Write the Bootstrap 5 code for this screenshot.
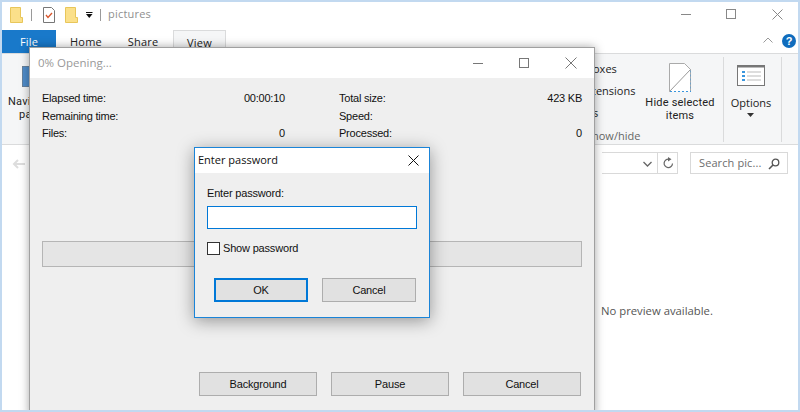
<!DOCTYPE html>
<html lang="en">
<head>
<meta charset="utf-8">
<title>pictures</title>
<link href="https://cdn.jsdelivr.net/npm/bootstrap@5.3.0/dist/css/bootstrap.min.css" rel="stylesheet">
<style>
html,body{margin:0;height:412px;overflow:hidden}
body{background:#c2d9f0;position:relative;font-family:"Open Sans","Noto Sans",sans-serif;font-size:11px;color:#222}
.explorer{position:absolute;left:2px;top:2px;width:796px;height:408px;background:#fff;overflow:hidden}
.qat{height:28px;padding:0 0 3px 8px}
.qat-title{color:#8f8f8f;font-size:11px;letter-spacing:.2px;margin-left:7px}
.qat-sep{width:1px;height:12px;background:#9a9a9a;margin:0 11px 0 8px}
.qat-sep.tail{margin:0 0 0 7px}
.win-ctl{margin-left:auto}
.tabs{height:23px;position:relative}
.tabx{height:23px;line-height:23px;text-align:center;font-size:11px;letter-spacing:.2px}
.tab-file{width:54px;background:#1979ca;color:#fff}
.tab-home{width:60px}.tab-share{width:54px}
.tab-view{width:53px;margin-left:3px;border:1px solid #dadbdc;border-bottom:0;background:#f5f6f7}
.ribbon{height:92px;background:#f5f6f7;border-top:1px solid #dadbdc;border-bottom:1px solid #dadbdc;position:relative}
.rib-abs{position:absolute;white-space:nowrap;line-height:13px}
.rib-two{font-family:Roboto,sans-serif;font-size:11px;letter-spacing:.2px}
.addr{height:36px;position:relative}
.search{position:absolute;left:688px;top:7px;width:98px;height:22px;border:1px solid #d9d9d9;color:#6d6d6d;padding-left:8px;line-height:20px;letter-spacing:.1px}
.addr-box{position:absolute;left:600px;top:7px;width:76px;height:22px;border:1px solid #d9d9d9;border-left:0}
.preview{position:absolute;left:599px;top:301px;color:#555;font-size:11.3px;white-space:nowrap}
.backarrow{position:absolute;left:10px;top:14px}
.desk-clip{position:absolute;left:0;top:0;width:800px;height:410px;overflow:hidden}
.progress-win{position:absolute;left:29px;top:47px;width:566px;height:370px;background:#efefef;border:1px solid #a0a0a0;box-shadow:0 0 9px rgba(0,0,0,.35);font-family:"Liberation Sans",Arial,sans-serif;font-size:11px;letter-spacing:-.22px;color:#111}
.win-title{height:30px;background:#fff;color:#999;font-family:"Open Sans",sans-serif;font-size:11.5px;letter-spacing:0;padding-left:8px;line-height:29px}
.stat-grid{display:grid;grid-template-columns:243px 243px;column-gap:54px;padding:12px 0 0 12px}
.stat-row{display:flex;justify-content:space-between;height:17.5px;line-height:17.5px;white-space:nowrap}
.pbar{margin:98.5px 0 0 12px;width:540px;height:26px;background:#e5e5e5;border:1px solid #b5b5b5}
.wbtns{margin:105px 0 0 169px;gap:14px}
.wbtn{width:118px;height:24px;background:#e1e1e1;border:1px solid #adadad;text-align:center;line-height:21px;font-size:11px;letter-spacing:-.18px;color:#111;padding:0;border-radius:0}
.pwd-dlg{position:absolute;left:194px;top:147px;width:236px;height:171px;background:#efefef;border:1px solid #1a84d8;box-shadow:0 3px 16px rgba(0,0,0,.38);font-family:"Liberation Sans",Arial,sans-serif;font-size:11px;letter-spacing:-.18px;color:#111}
.dlg-title{height:25px;background:#fff;font-family:"Open Sans",sans-serif;font-size:11px;letter-spacing:0;padding-left:3px;line-height:24px;color:#111}
.dlg-body{padding:12px 12px 0 12px}
.dlg-label{line-height:17px}
.pw-input{width:210px;height:23px;background:#fff;border:1px solid #0078d7;border-radius:0;display:block;margin-top:4px;padding:0}
.chk-row{margin-top:13px;gap:3px;height:13px;line-height:13px}
.chk-box{width:13px;height:13px;background:#fff;border:1px solid #333;margin:0;appearance:none;display:block}
.dlg-btns{margin:23px 0 0 7px;gap:14px}
.dlg-btn{width:94px;height:24px;background:#e1e1e1;border:1px solid #adadad;text-align:center;line-height:21px;font-size:11px;letter-spacing:-.18px;padding:0;color:#111;border-radius:0}
.dlg-btn.on{border:2px solid #0078d7;line-height:19px}
</style>
</head>
<body>
<div class="explorer">
  <div class="qat d-flex align-items-center">
    <svg width="13" height="16" viewBox="0 0 13 16"><path d="M.5.5h10v10h2v5H.5z" fill="#fbe08a" stroke="#e8c65a"/></svg>
    <span class="qat-sep"></span>
    <svg width="12" height="16" viewBox="0 0 12 16"><path d="M.5.5h8l3 3v12H.5z" fill="#fff" stroke="#777"/><path d="M3 8l2 2.500 4-4.500" fill="none" stroke="#d8552b" stroke-width="1.300"/></svg>
    <span style="width:10px"></span>
    <svg width="13" height="16" viewBox="0 0 13 16"><path d="M.5.5h10v10h2v5H.5z" fill="#fbe08a" stroke="#e8c65a"/></svg>
    <svg class="ms-2" width="7" height="6" viewBox="0 0 7 6"><path d="M0 0h6.500v1H0zM0 2h6.500L3.250 6z" fill="#111"/></svg>
    <span class="qat-sep tail"></span>
    <span class="qat-title">pictures</span>
    <div class="win-ctl d-flex align-items-center">
      <svg width="11" height="11" viewBox="0 0 11 11" style="margin-right:34px"><path d="M0 5.500h10" stroke="#888"/></svg>
      <svg width="11" height="11" viewBox="0 0 11 11" style="margin-right:35px"><rect x=".5" y=".5" width="9" height="9" fill="none" stroke="#888"/></svg>
      <svg width="11" height="11" viewBox="0 0 11 11" style="margin-right:15px"><path d="M.5.500l10 10M10.500.500l-10 10" stroke="#888"/></svg>
    </div>
  </div>
  <div class="tabs d-flex">
    <div class="tabx tab-file">File</div>
    <div class="tabx tab-home">Home</div>
    <div class="tabx tab-share">Share</div>
    <div class="tabx tab-view">View</div>
    <svg style="position:absolute;left:761px;top:7px" width="10" height="7" viewBox="0 0 10 7"><path d="M.5 5.500L5 1l4.500 4.500" fill="none" stroke="#999"/></svg>
    <svg style="position:absolute;left:780px;top:4px" width="14" height="14" viewBox="0 0 14 14"><circle cx="7" cy="7" r="7" fill="#0f6cbd"/><text x="7" y="11" text-anchor="middle" font-size="11" font-weight="700" fill="#fff" font-family="Liberation Sans">?</text></svg>
  </div>
  <div class="ribbon">
    <svg style="position:absolute;left:20px;top:12px" width="10" height="21"><rect width="10" height="21" fill="#4f8cc9" stroke="#777"/></svg>
    <div class="rib-abs rib-two" style="left:6px;top:41px">Navi</div>
    <div class="rib-abs rib-two" style="left:17px;top:54px">pa</div>
    <div class="rib-abs" style="left:591px;top:8px">oxes</div>
    <div class="rib-abs" style="left:590px;top:30px">tensions</div>
    <div class="rib-abs" style="left:591px;top:52px">s</div>
    <div class="rib-abs" style="left:590px;top:75px;color:#666">how/hide</div>
    <svg style="position:absolute;left:667px;top:9px" width="22" height="29" viewBox="0 0 22 29"><path d="M.5 28.500V.5h15l6 6v22" fill="#fff" stroke="#aaa"/><path d="M.5 28.500l21-22" stroke="#999"/><path d="M1 28.500h21V7" fill="none" stroke="#3a96dd" stroke-dasharray="2 2"/></svg>
    <div class="rib-abs rib-two text-center" style="left:640px;top:42px;width:76px">Hide selected<br>items</div>
    <div class="rib-abs" style="left:721px;top:3px;width:1px;height:85px;background:#dadbdc"></div>
    <svg style="position:absolute;left:735px;top:11px" width="28" height="21" viewBox="0 0 28 21"><rect x=".5" y=".5" width="27" height="20" fill="#fff" stroke="#777"/><path d="M1 1.500h26" stroke="#777" stroke-width="2"/><path d="M10 7h14M10 11h14M10 15h14" stroke="#bbb"/><path d="M5 6h3v2H5zM5 10h3v2H5zM5 14h3v2H5z" fill="#3a96dd"/></svg>
    <div class="rib-abs text-center" style="left:725px;top:42px;width:48px">Options</div>
    <svg style="position:absolute;left:745px;top:59px" width="7" height="4" viewBox="0 0 7 4"><path d="M0 0h7L3.500 4z" fill="#333"/></svg>
    <div class="rib-abs" style="left:779px;top:3px;width:1px;height:85px;background:#dadbdc"></div>
  </div>
  <div class="addr">
    <svg class="backarrow" width="14" height="10" viewBox="0 0 14 10"><path d="M13 5H2M6 1L2 5l4 4" fill="none" stroke="#ddd" stroke-width="2"/></svg>
    <div class="addr-box">
      <svg style="position:absolute;left:41px;top:8px" width="9" height="6" viewBox="0 0 9 6"><path d="M.5 1L4.500 5l4-4" fill="none" stroke="#666" stroke-width="1.300"/></svg>
      <span style="position:absolute;left:55px;top:0;width:1px;height:20px;background:#d9d9d9"></span>
      <svg style="position:absolute;left:61px;top:4px" width="11" height="12" viewBox="0 0 11 12"><path d="M9.500 6.500A4.200 4.200 0 1 1 6 2.200" fill="none" stroke="#666" stroke-width="1.200"/><path d="M5 0l3.500 2.300L5 4.500z" fill="#666"/></svg>
    </div>
    <div class="search">Search pic...
      <svg style="position:absolute;left:77px;top:5px" width="12" height="12" viewBox="0 0 12 12"><circle cx="7.500" cy="4.500" r="3.300" fill="none" stroke="#555" stroke-width="1.300"/><path d="M5 7l-4 4" stroke="#555" stroke-width="1.600"/></svg>
    </div>
  </div>
  <div class="preview">No preview available.</div>
</div>

<div class="desk-clip">
<div class="progress-win">
  <div class="win-title d-flex">0% Opening...
    <div class="d-flex align-items-center" style="margin-left:auto">
      <svg width="11" height="11" viewBox="0 0 11 11" style="margin-right:35px"><path d="M0 5.500h10" stroke="#777"/></svg>
      <svg width="11" height="11" viewBox="0 0 11 11" style="margin-right:35px"><rect x=".5" y=".5" width="9" height="9" fill="none" stroke="#777"/></svg>
      <svg width="12" height="12" viewBox="0 0 12 12" style="margin-right:17px"><path d="M.5.500l11 11M11.500.500l-11 11" stroke="#777"/></svg>
    </div>
  </div>
  <div class="stat-grid">
    <div>
      <div class="stat-row"><span>Elapsed time:</span><span>00:00:10</span></div>
      <div class="stat-row"><span>Remaining time:</span><span></span></div>
      <div class="stat-row"><span>Files:</span><span>0</span></div>
    </div>
    <div>
      <div class="stat-row"><span>Total size:</span><span>423 KB</span></div>
      <div class="stat-row"><span>Speed:</span><span></span></div>
      <div class="stat-row"><span>Processed:</span><span>0</span></div>
    </div>
  </div>
  <div class="pbar"></div>
  <div class="wbtns d-flex">
    <button class="wbtn" type="button">Background</button>
    <button class="wbtn" type="button">Pause</button>
    <button class="wbtn" type="button">Cancel</button>
  </div>
</div>

<div class="pwd-dlg">
  <div class="dlg-title d-flex">Enter password
    <svg class="ms-auto" style="margin:7px 10px 0 0" width="11" height="11" viewBox="0 0 11 11"><path d="M.5.500l10 10M10.500.500l-10 10" stroke="#111"/></svg>
  </div>
  <div class="dlg-body">
    <div class="dlg-label">Enter password:</div>
    <input class="pw-input" type="text" aria-label="Enter password">
    <div class="chk-row d-flex"><input class="chk-box" type="checkbox" aria-label="Show password"><span>Show password</span></div>
    <div class="dlg-btns d-flex">
      <button class="dlg-btn on" type="button">OK</button>
      <button class="dlg-btn" type="button">Cancel</button>
    </div>
  </div>
</div>
</div>
<script src="https://cdn.jsdelivr.net/npm/bootstrap@5.3.0/dist/js/bootstrap.bundle.min.js"></script>
</body>
</html>
